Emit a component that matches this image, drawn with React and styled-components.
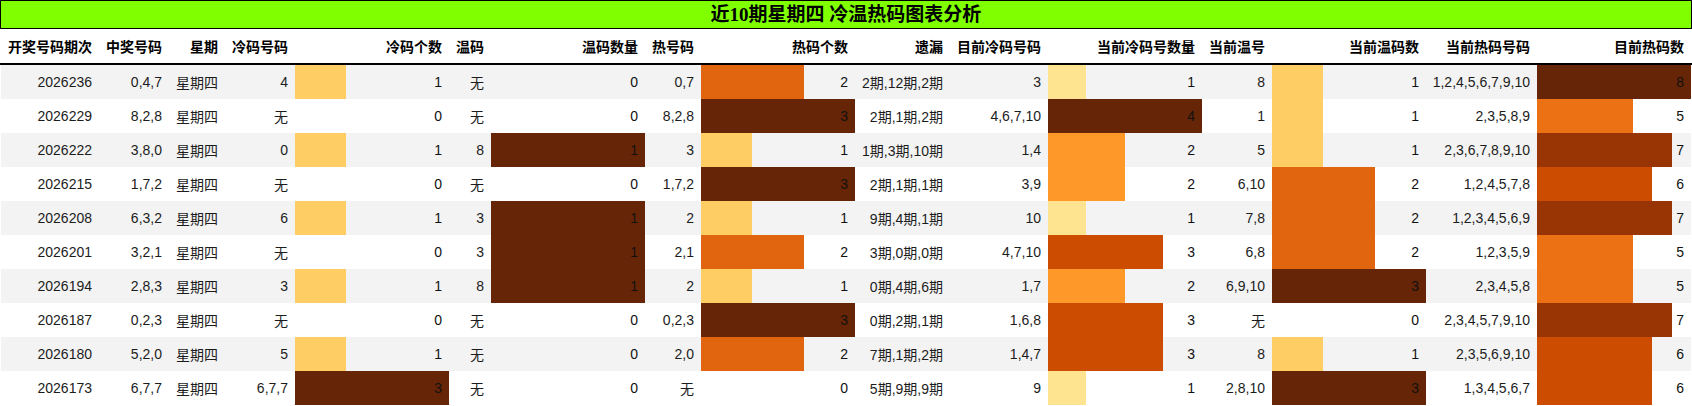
import React from "react";
import styled, { createGlobalStyle } from "styled-components";

const GlobalStyle = createGlobalStyle`
  html, body { margin: 0; padding: 0; background: #fff; }
  body {
    font-family: "Liberation Sans", Arial, "Noto Sans CJK SC", sans-serif;
    font-size: 14px;
    color: #1c1c1c;
  }
`;

const COLS = "98px 70px 56px 70px 154px 42px 154px 56px 154px 95px 98px 154px 70px 154px 111px 154px";

const Page = styled.div`
  width: 1692px;
`;

const Title = styled.div`
  height: 27px;
  border: 1px solid #000;
  background: #7fff00;
  color: #000;
  text-align: center;
  line-height: 27px;
  font-family: "Liberation Serif", "Noto Sans CJK SC", serif;
  font-weight: bold;
  font-size: 19px;
`;

const HeaderRow = styled.div`
  display: grid;
  grid-template-columns: ${COLS};
  height: 34px;
  padding-left: 1px;
  border-bottom: 2px solid #000;
`;

const HeadCell = styled.div`
  display: flex;
  align-items: center;
  justify-content: flex-end;
  padding: 0 7px;
  white-space: nowrap;
  font-weight: bold;
  color: #000;
  font-family: "Liberation Sans", "Noto Sans CJK SC", sans-serif;
`;

const Body = styled.div`
  padding-left: 1px;
`;

const Row = styled.div`
  display: grid;
  grid-template-columns: ${COLS};
  width: 1690px;
  height: 34px;
  background: ${(p) => (p.$shade ? "#f3f3f3" : "#ffffff")};
`;

const Cell = styled.div`
  display: flex;
  align-items: center;
  justify-content: flex-end;
  padding: 0 7px;
  white-space: nowrap;
`;

const BarCell = styled(Cell)`
  background-repeat: no-repeat;
  color: #111;
`;

const YLORBR = [
  "#ffffe5", "#fff7bc", "#fee391", "#fec44f", "#fe9929",
  "#ec7014", "#cc4c02", "#993404", "#662506",
];

function hex(c) {
  return [1, 3, 5].map((i) => parseInt(c.slice(i, i + 2), 16));
}

function scaleColor(t) {
  const pos = Math.max(0, Math.min(1, t)) * 8;
  const i = Math.min(7, Math.floor(pos));
  const f = pos - i;
  const a = hex(YLORBR[i]);
  const b = hex(YLORBR[i + 1]);
  const m = a.map((v, k) => Math.round(v + (b[k] - v) * f));
  return `rgb(${m[0]},${m[1]},${m[2]})`;
}

const headers = [
  "开奖号码期次", "中奖号码", "星期", "冷码号码", "冷码个数", "温码", "温码数量",
  "热号码", "热码个数", "遗漏", "目前冷码号码", "当前冷码号数量", "当前温号",
  "当前温码数", "当前热码号码", "目前热码数",
];

const rows = [
  ["2026236", "0,4,7", "星期四", "4", 1, "无", 0, "0,7", 2, "2期,12期,2期", "3", 1, "8", 1, "1,2,4,5,6,7,9,10", 8],
  ["2026229", "8,2,8", "星期四", "无", 0, "无", 0, "8,2,8", 3, "2期,1期,2期", "4,6,7,10", 4, "1", 1, "2,3,5,8,9", 5],
  ["2026222", "3,8,0", "星期四", "0", 1, "8", 1, "3", 1, "1期,3期,10期", "1,4", 2, "5", 1, "2,3,6,7,8,9,10", 7],
  ["2026215", "1,7,2", "星期四", "无", 0, "无", 0, "1,7,2", 3, "2期,1期,1期", "3,9", 2, "6,10", 2, "1,2,4,5,7,8", 6],
  ["2026208", "6,3,2", "星期四", "6", 1, "3", 1, "2", 1, "9期,4期,1期", "10", 1, "7,8", 2, "1,2,3,4,5,6,9", 7],
  ["2026201", "3,2,1", "星期四", "无", 0, "3", 1, "2,1", 2, "3期,0期,0期", "4,7,10", 3, "6,8", 2, "1,2,3,5,9", 5],
  ["2026194", "2,8,3", "星期四", "3", 1, "8", 1, "2", 1, "0期,4期,6期", "1,7", 2, "6,9,10", 3, "2,3,4,5,8", 5],
  ["2026187", "0,2,3", "星期四", "无", 0, "无", 0, "0,2,3", 3, "0期,2期,1期", "1,6,8", 3, "无", 0, "2,3,4,5,7,9,10", 7],
  ["2026180", "5,2,0", "星期四", "5", 1, "无", 0, "2,0", 2, "7期,1期,2期", "1,4,7", 3, "8", 1, "2,3,5,6,9,10", 6],
  ["2026173", "6,7,7", "星期四", "6,7,7", 3, "无", 0, "无", 0, "5期,9期,9期", "9", 1, "2,8,10", 3, "1,3,4,5,6,7", 6],
];

const barCols = [4, 6, 8, 11, 13, 15];
const maxes = {};
barCols.forEach((c) => {
  maxes[c] = Math.max(...rows.map((r) => r[c]));
});

function barStyle(v, max) {
  if (!v) return undefined;
  const t = v / max;
  const col = scaleColor(t);
  const pct = (t * 100).toFixed(3);
  return {
    backgroundImage: `linear-gradient(to right, ${col} 0, ${col} ${pct}%, transparent ${pct}%)`,
  };
}

export default function App() {
  return (
    <Page>
      <GlobalStyle />
      <Title>近10期星期四 冷温热码图表分析</Title>
      <HeaderRow>
        {headers.map((h) => (
          <HeadCell key={h}>{h}</HeadCell>
        ))}
      </HeaderRow>
      <Body>
        {rows.map((r, ri) => (
          <Row key={r[0]} $shade={ri % 2 === 0}>
            {r.map((v, ci) =>
              barCols.includes(ci) ? (
                <BarCell key={ci} style={barStyle(v, maxes[ci])}>
                  {v}
                </BarCell>
              ) : (
                <Cell key={ci}>{v}</Cell>
              )
            )}
          </Row>
        ))}
      </Body>
    </Page>
  );
}
